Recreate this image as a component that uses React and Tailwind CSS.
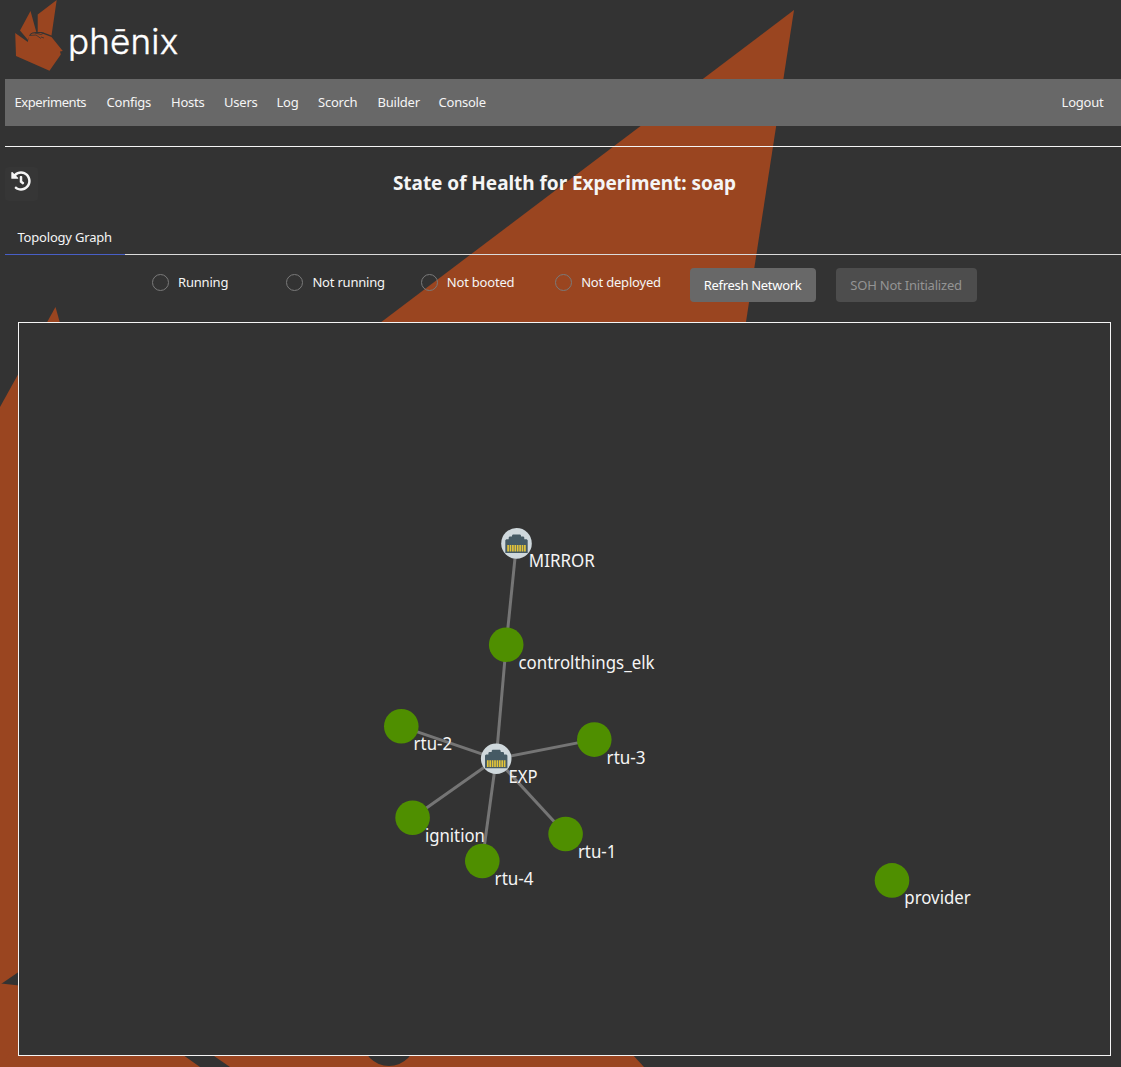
import { FaHistory } from "react-icons/fa";

const NAV = [
  ["Experiments", "w-[72px] tracking-[-0.45px]"],
  ["Configs", "w-[44.5px]"],
  ["Hosts", "w-[33px]"],
  ["Users", "w-[32.5px]"],
  ["Log", "w-[21.5px]"],
  ["Scorch", "w-[39.5px]"],
  ["Builder", "w-[41px]"],
  ["Console", "w-[48px]"],
];

const FILTERS = ["Running", "Not running", "Not booted", "Not deployed"];

const NODES = [
  { id: "MIRROR", x: 516.5, y: 543.4, sw: true, w: 66 },
  { id: "controlthings_elk", x: 506.2, y: 644.7, w: 136 },
  { id: "rtu-2", x: 401.3, y: 726.3, w: 38.5 },
  { id: "EXP", x: 496.2, y: 758.8, sw: true, w: 29 },
  { id: "rtu-3", x: 594.3, y: 739.6, w: 39 },
  { id: "ignition", x: 412.6, y: 817.7, w: 60 },
  { id: "rtu-4", x: 482.3, y: 861, w: 39 },
  { id: "rtu-1", x: 565.6, y: 834, w: 38.5 },
  { id: "provider", x: 892, y: 880.4, w: 66.5 },
];

const LINKS = [[0, 1], [1, 3], [2, 3], [3, 4], [3, 5], [3, 6], [3, 7]];

function Backdrop() {
  return (
    <svg className="absolute inset-0 h-full w-full" viewBox="0 0 1121 1067" fill="#9a4520">
      <path d="M794 10L380 323L380 500L718.600 500Z" />
      <path d="M55.500 307L0 407V984H1L80 930V395Z" />
      <path d="M0 983.500H1L60 990V1067H0Z" />
      <path d="M18 1040H162L200 1067H0Z" />
      <path d="M198 1045L230 1067H644L619 1040Z" />
      <circle cx="389" cy="1039" r="27" fill="#333333" />
    </svg>
  );
}

function Logo() {
  return (
    <div className="flex h-[79px] pl-[15px]">
      <svg className="h-[72px] w-12 shrink-0" viewBox="15 0 48 72" fill="#9a4520">
        <path d="M56.700 0L37.700 14.500V32L42 32L51.500 35.500Z" />
        <path d="M30.500 11L20 30.500L28 40L30 34L32.500 32.500L36.300 32Z" />
        <path d="M15.200 33L27.800 42L29 36L32.500 33.500L41 33L51.500 37L62.800 51L60 51.500L60.800 54.500L49.500 70.800L16 56Z" />
        <path d="M29.500 35.500L36 35L41 38.500M35 33L41 34.500L44 33M41 37L44 38" fill="none" stroke="#333333" strokeWidth="0.8" />
      </svg>
      <span className="ml-[5px] mt-[15px] font-[Inter] text-[35px] leading-[53px] font-light tracking-[0.2px] text-white [-webkit-text-stroke:0.4px_white]">phēnix</span>
    </div>
  );
}

function Switch({ x, y }) {
  return (
    <g transform={`translate(${x} ${y})`}>
      <circle r="15.300" fill="#cfd8dc" />
      <path d="M-11.200 9.500V-3.200L-10.200-4.200H-7.800V-6L-7-6.800H-4.500V-8L-3.700-9H3.700L4.500-8V-6.800H7L7.800-6V-4.200H10.200L11.200-3.200V9.500Z" fill="#455a64" />
      <path d="M-8.400 1.500V8.200M-6 1.500V8.200M-3.600 1.500V8.200M-1.200 1.500V8.200M1.200 1.500V8.200M3.600 1.500V8.200M6 1.500V8.200M8.400 1.500V8.200" stroke="#e3c53a" strokeWidth="1.700" />
    </g>
  );
}

function Graph() {
  return (
    <svg className="block h-full w-full" viewBox="19 323 1091 732">
      {LINKS.map(([a, b]) => (
        <line key={`${a}-${b}`} x1={NODES[a].x} y1={NODES[a].y} x2={NODES[b].x} y2={NODES[b].y} stroke="#757575" strokeWidth="3" />
      ))}
      {NODES.map((n) =>
        n.sw ? <Switch key={n.id} x={n.x} y={n.y} /> : <circle key={n.id} cx={n.x} cy={n.y} r="17.300" fill="#4f8f00" />
      )}
      {NODES.map((n) => (
        <text key={n.id} x={n.x + 12.3} y={n.y + 24} textLength={n.w} lengthAdjust="spacingAndGlyphs" fill="#f5f5f5" fontSize="17.500">
          {n.id}
        </text>
      ))}
    </svg>
  );
}

export default function App() {
  return (
    <div className="relative h-[1067px] w-[1121px] overflow-hidden bg-[#333333] font-['Noto_Sans','Open_Sans',sans-serif] text-[13px] text-[#f5f5f5]">
      <Backdrop />
      <div className="relative flex h-full flex-col pl-[5px]">
        <header className="-ml-[5px]"><Logo /></header>
        <nav className="flex h-[47px] shrink-0 items-center gap-[20px] bg-[#686868] pl-[9.500px] pr-[17.500px] tracking-[-0.22px]">
          {NAV.map(([label, style]) => (
            <a key={label} className={`${style} whitespace-nowrap`}>{label}</a>
          ))}
          <a className="ml-auto">Logout</a>
        </nav>
        <hr className="mt-5 shrink-0 border-0 border-t border-solid border-[#f5f5f5]" />
        <div className="mt-5 flex h-[34px] shrink-0 items-start">
          <button className="flex h-[34px] w-[33px] items-start justify-center rounded bg-[#363636] pt-1 pr-[2px] text-[20px]"><FaHistory /></button>
          <h1 className="mr-[30px] flex-1 text-center text-[19px] leading-[32px] font-bold tracking-[-0.04px]">State of Health for Experiment: soap</h1>
        </div>
        <div className="mt-[19px] flex h-[35px] shrink-0">
          <div className="w-[120px] border-b border-[#485fc7] pl-[12.500px] leading-[34px] tracking-[-0.2px]">Topology Graph</div>
          <div className="flex-1 border-b border-[#dbdbdb]" />
        </div>
        <div className="ml-[147px] mt-[13px] flex h-[34px] shrink-0">
          {FILTERS.map((label) => (
            <label key={label} className="flex h-[29px] w-[134.400px] items-center gap-[9px] whitespace-nowrap tracking-[-0.2px]">
              <span className="h-[17px] w-[17px] rounded-full border border-[#7a7a7a]" />
              {label}
            </label>
          ))}
          <button className="h-[34px] w-[126px] rounded bg-[#686868] pt-px tracking-[-0.3px] text-white">Refresh Network</button>
          <button className="ml-5 h-[34px] w-[141px] rounded bg-[#4d4d4d] pt-px tracking-[-0.2px] text-[#949494]">SOH Not Initialized</button>
        </div>
        <main className="ml-[13px] mt-5 h-[734px] w-[1093px] shrink-0 border border-[#f5f5f5] bg-[#333333]"><Graph /></main>
      </div>
    </div>
  );
}
